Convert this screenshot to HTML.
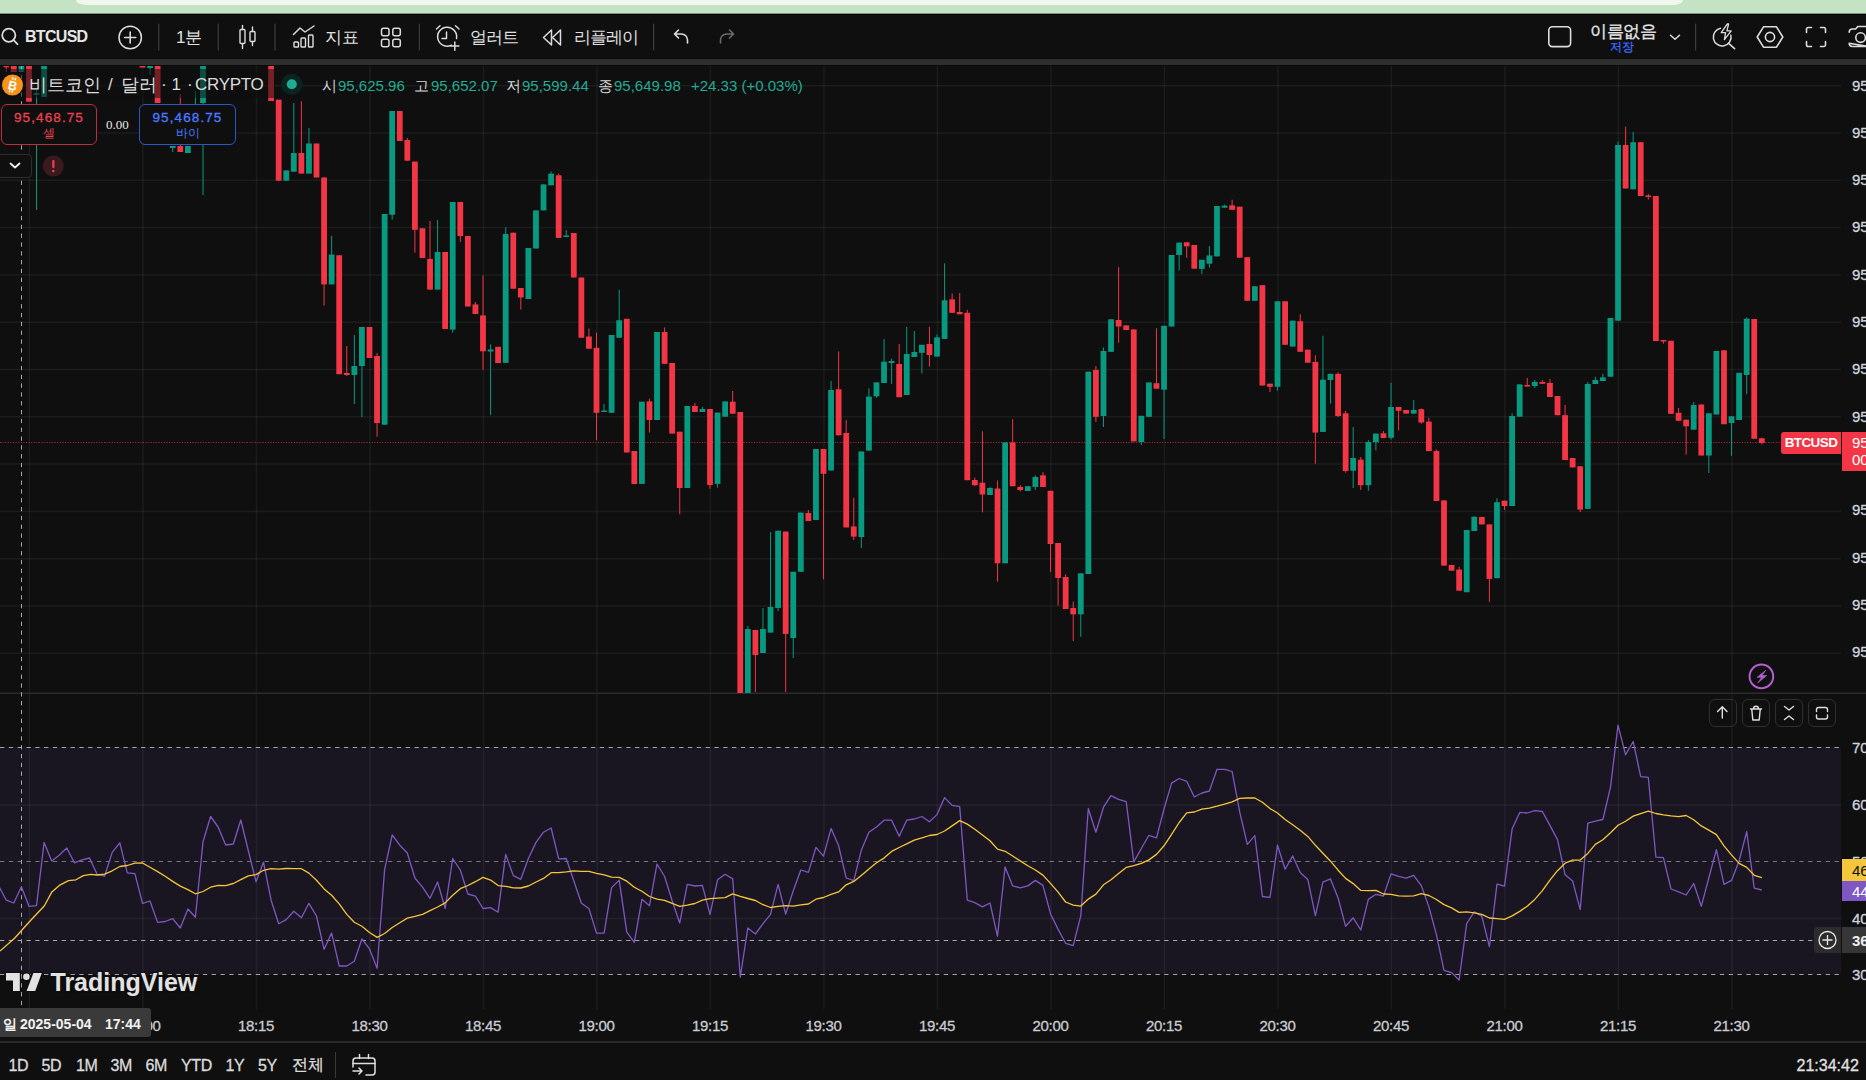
<!DOCTYPE html>
<html><head><meta charset="utf-8"><title>BTCUSD</title>
<style>
*{margin:0;padding:0;box-sizing:border-box}
html,body{width:1866px;height:1080px;overflow:hidden;background:#0f0f0f;font-family:"Liberation Sans",sans-serif;color:#d1d4dc}
.abs{position:absolute}
.t{position:absolute;white-space:nowrap;line-height:1}
.m{-webkit-text-stroke:0.3px currentColor}
.ic{position:absolute}
</style></head><body>
<!-- top browser strip -->
<div class="abs" style="left:0;top:0;width:1866px;height:14px;background:#c4e2c4"></div>
<div class="abs" style="left:0;top:13px;width:1866px;height:1px;background:#7d8f7d"></div>
<div class="abs" style="left:75.5px;top:0;width:1607px;height:5px;background:#f1f6ef;border-radius:0 0 10px 10px / 0 0 5px 5px"></div>
<div class="abs" style="left:0;top:14px;width:1866px;height:1px;background:#050505"></div>
<!-- toolbar -->
<div class="abs" style="left:0;top:15px;width:1866px;height:43px;background:#0f0f0f"></div>
<div class="abs" style="left:0;top:58px;width:1866px;height:1px;background:#0a0a0a"></div>
<div class="abs" style="left:0;top:59px;width:1866px;height:6px;background:#2e2e2e"></div>
<div class="abs" style="left:0;top:65px;width:1866px;height:1px;background:#0a0a0a"></div>
<svg class="abs" style="left:0;top:14px" width="1866" height="44" viewBox="0 14 1866 44" fill="none" stroke="#dcdcdc" stroke-width="1.6" stroke-linecap="round" stroke-linejoin="round">
  <!-- search -->
  <circle cx="8.8" cy="35.3" r="6.6" stroke-width="1.8"/>
  <line x1="13.6" y1="40.2" x2="17.5" y2="44.2" stroke-width="1.8"/>
  <!-- plus circle -->
  <circle cx="130.2" cy="37.5" r="11.2" stroke-width="1.5"/>
  <line x1="130.2" y1="32" x2="130.2" y2="43" stroke-width="1.6"/>
  <line x1="124.7" y1="37.5" x2="135.7" y2="37.5" stroke-width="1.6"/>
  <!-- separators -->
  <g stroke="#3d3d3d" stroke-width="1.2">
    <line x1="158.8" y1="24" x2="158.8" y2="50"/>
    <line x1="218.3" y1="24" x2="218.3" y2="50"/>
    <line x1="275" y1="24" x2="275" y2="50"/>
    <line x1="419.3" y1="24" x2="419.3" y2="50"/>
    <line x1="653.6" y1="24" x2="653.6" y2="50"/>
    <line x1="1695.6" y1="24" x2="1695.6" y2="50"/>
  </g>
  <!-- candle icon -->
  <rect x="240" y="29.5" width="5" height="14" rx="1" stroke-width="1.4"/>
  <line x1="242.5" y1="25.5" x2="242.5" y2="29.5" stroke-width="1.4"/>
  <line x1="242.5" y1="43.5" x2="242.5" y2="48.5" stroke-width="1.4"/>
  <rect x="250" y="31.5" width="5" height="10" rx="1" stroke-width="1.4"/>
  <line x1="252.5" y1="27" x2="252.5" y2="31.5" stroke-width="1.4"/>
  <line x1="252.5" y1="41.5" x2="252.5" y2="45.5" stroke-width="1.4"/>
  <!-- indicators icon -->
  <path d="M293.5 34.5 L300 28 L305 32 L314 26" stroke-width="1.5"/>
  <rect x="294" y="42" width="4.5" height="5" rx="0.8" stroke-width="1.4"/>
  <rect x="301" y="38" width="4.5" height="9" rx="0.8" stroke-width="1.4"/>
  <rect x="308.5" y="35" width="4.5" height="12" rx="0.8" stroke-width="1.4"/>
  <!-- grid icon -->
  <rect x="381.5" y="28.2" width="7.5" height="7.5" rx="2" stroke-width="1.5"/>
  <rect x="392.8" y="28.2" width="7.5" height="7.5" rx="2" stroke-width="1.5"/>
  <rect x="381.5" y="39.2" width="7.5" height="7.5" rx="2" stroke-width="1.5"/>
  <rect x="392.8" y="39.2" width="7.5" height="7.5" rx="2" stroke-width="1.5"/>
  <!-- alert icon -->
  <path d="M451.5 45.2 A9.5 9.5 0 1 1 456.5 38.5" stroke-width="1.5"/>
  <path d="M446.5 32 V38.5 H442" stroke-width="1.5"/>
  <line x1="436.5" y1="29" x2="440" y2="25.8" stroke-width="1.5"/>
  <line x1="455.5" y1="25.8" x2="459" y2="29" stroke-width="1.5"/>
  <line x1="454.8" y1="42" x2="454.8" y2="50.2" stroke-width="1.5"/>
  <line x1="450.7" y1="46.1" x2="458.9" y2="46.1" stroke-width="1.5"/>
  <!-- replay icon -->
  <path d="M551.5 30 L543.5 37.5 L551.5 45 Z" stroke-width="1.5"/>
  <path d="M560.5 30 L552.5 37.5 L560.5 45 Z" stroke-width="1.5"/>
  <!-- undo -->
  <path d="M687.5 43 V40 A6 6 0 0 0 681.5 34 H674.5 M678.5 30 L674.5 34 L678.5 38" stroke-width="1.6"/>
  <!-- redo -->
  <path d="M720.5 43 V40 A6 6 0 0 1 726.5 34 H733.5 M729.5 30 L733.5 34 L729.5 38" stroke="#6b6b6b" stroke-width="1.6"/>
  <!-- square -->
  <rect x="1548.8" y="26.8" width="21.8" height="19.8" rx="3.5" stroke-width="1.6"/>
  <!-- chevron -->
  <path d="M1670.5 35.2 L1675 39.3 L1679.5 35.2" stroke-width="1.5"/>
  <!-- quick search -->
  <path d="M1720.5 28.3 A8.9 8.9 0 1 0 1730.9 35.2" stroke-width="1.5"/>
  <line x1="1728.6" y1="43.3" x2="1734.6" y2="48.7" stroke-width="1.6"/>
  <path d="M1727.3 24 L1721.2 32.6 H1725.6 L1724.4 39.6 L1731.2 30.9 H1726.9 L1728.6 24 Z" stroke-width="1.3"/>
  <!-- settings hexagon -->
  <path d="M1763.5 26.8 H1776.5 L1782.8 37 L1776.5 47.2 H1763.5 L1757.2 37 Z" stroke-width="1.6"/>
  <circle cx="1770" cy="37" r="4.6" stroke-width="1.6"/>
  <!-- fullscreen -->
  <path d="M1806.5 32.5 V29.3 A1.8 1.8 0 0 1 1808.3 27.5 H1811.5 M1820.5 27.5 H1823.7 A1.8 1.8 0 0 1 1825.5 29.3 V32.5 M1825.5 41.5 V44.7 A1.8 1.8 0 0 1 1823.7 46.5 H1820.5 M1811.5 46.5 H1808.3 A1.8 1.8 0 0 1 1806.5 44.7 V41.5" stroke-width="1.6"/>
  <!-- camera -->
  <path d="M1849.2 32.2 A3.2 3.2 0 0 1 1852.4 29 H1855.6 L1857.8 26.5 H1868 M1868 46.5 H1852.4 A3.2 3.2 0 0 1 1849.2 43.3 Z" stroke-width="1.6"/>
  <circle cx="1860.6" cy="37.6" r="4.8" stroke-width="1.6"/>
</svg>
<div class="t" style="left:25px;top:28.5px;font-size:16px;font-weight:bold;color:#e6e6e6;letter-spacing:-0.7px">BTCUSD</div>
<div class="t" style="left:176px;top:28.5px;font-size:17px;color:#e0e0e0">1분</div>
<div class="t" style="left:325px;top:28.5px;font-size:17px;color:#e0e0e0">지표</div>
<div class="t" style="left:470px;top:29px;font-size:16.5px;letter-spacing:-0.9px;color:#e0e0e0">얼러트</div>
<div class="t" style="left:574px;top:29px;font-size:16.5px;letter-spacing:-1px;color:#e0e0e0">리플레이</div>
<div class="t" style="left:1590px;top:23px;font-size:16.5px;letter-spacing:-0.5px;color:#e6e6e6;-webkit-text-stroke:0.3px #e6e6e6">이름없음</div>
<div class="t" style="left:1610px;top:42px;font-size:11.5px;color:#3d6bff;-webkit-text-stroke:0.3px #3d6bff">저장</div>
<svg class="abs" style="left:0;top:0" width="1866" height="1080" viewBox="0 0 1866 1080">
<defs><clipPath id="mainclip"><rect x="0" y="66" width="1841" height="627"/></clipPath><clipPath id="rsiclip"><rect x="0" y="694" width="1841" height="315"/></clipPath></defs>
<rect x="0" y="747" width="1841" height="227.5" fill="#1a1621"/>
<line x1="0" y1="85.7" x2="1841" y2="85.7" stroke="rgba(242,242,242,0.058)" stroke-width="1.5"/>
<line x1="0" y1="133.0" x2="1841" y2="133.0" stroke="rgba(242,242,242,0.058)" stroke-width="1.5"/>
<line x1="0" y1="180.3" x2="1841" y2="180.3" stroke="rgba(242,242,242,0.058)" stroke-width="1.5"/>
<line x1="0" y1="227.6" x2="1841" y2="227.6" stroke="rgba(242,242,242,0.058)" stroke-width="1.5"/>
<line x1="0" y1="274.9" x2="1841" y2="274.9" stroke="rgba(242,242,242,0.058)" stroke-width="1.5"/>
<line x1="0" y1="322.2" x2="1841" y2="322.2" stroke="rgba(242,242,242,0.058)" stroke-width="1.5"/>
<line x1="0" y1="369.5" x2="1841" y2="369.5" stroke="rgba(242,242,242,0.058)" stroke-width="1.5"/>
<line x1="0" y1="416.8" x2="1841" y2="416.8" stroke="rgba(242,242,242,0.058)" stroke-width="1.5"/>
<line x1="0" y1="464.1" x2="1841" y2="464.1" stroke="rgba(242,242,242,0.058)" stroke-width="1.5"/>
<line x1="0" y1="511.4" x2="1841" y2="511.4" stroke="rgba(242,242,242,0.058)" stroke-width="1.5"/>
<line x1="0" y1="558.7" x2="1841" y2="558.7" stroke="rgba(242,242,242,0.058)" stroke-width="1.5"/>
<line x1="0" y1="606.0" x2="1841" y2="606.0" stroke="rgba(242,242,242,0.058)" stroke-width="1.5"/>
<line x1="0" y1="653.3" x2="1841" y2="653.3" stroke="rgba(242,242,242,0.058)" stroke-width="1.5"/>
<line x1="0" y1="804.9" x2="1841" y2="804.9" stroke="rgba(242,242,242,0.058)" stroke-width="1.5"/>
<line x1="0" y1="918.4" x2="1841" y2="918.4" stroke="rgba(242,242,242,0.058)" stroke-width="1.5"/>
<line x1="29.4" y1="66" x2="29.4" y2="1009" stroke="rgba(242,242,242,0.058)" stroke-width="1.5"/>
<line x1="142.9" y1="66" x2="142.9" y2="1009" stroke="rgba(242,242,242,0.058)" stroke-width="1.5"/>
<line x1="256.4" y1="66" x2="256.4" y2="1009" stroke="rgba(242,242,242,0.058)" stroke-width="1.5"/>
<line x1="369.9" y1="66" x2="369.9" y2="1009" stroke="rgba(242,242,242,0.058)" stroke-width="1.5"/>
<line x1="483.4" y1="66" x2="483.4" y2="1009" stroke="rgba(242,242,242,0.058)" stroke-width="1.5"/>
<line x1="596.9" y1="66" x2="596.9" y2="1009" stroke="rgba(242,242,242,0.058)" stroke-width="1.5"/>
<line x1="710.4" y1="66" x2="710.4" y2="1009" stroke="rgba(242,242,242,0.058)" stroke-width="1.5"/>
<line x1="823.9" y1="66" x2="823.9" y2="1009" stroke="rgba(242,242,242,0.058)" stroke-width="1.5"/>
<line x1="937.4" y1="66" x2="937.4" y2="1009" stroke="rgba(242,242,242,0.058)" stroke-width="1.5"/>
<line x1="1050.9" y1="66" x2="1050.9" y2="1009" stroke="rgba(242,242,242,0.058)" stroke-width="1.5"/>
<line x1="1164.4" y1="66" x2="1164.4" y2="1009" stroke="rgba(242,242,242,0.058)" stroke-width="1.5"/>
<line x1="1277.9" y1="66" x2="1277.9" y2="1009" stroke="rgba(242,242,242,0.058)" stroke-width="1.5"/>
<line x1="1391.4" y1="66" x2="1391.4" y2="1009" stroke="rgba(242,242,242,0.058)" stroke-width="1.5"/>
<line x1="1504.9" y1="66" x2="1504.9" y2="1009" stroke="rgba(242,242,242,0.058)" stroke-width="1.5"/>
<line x1="1618.4" y1="66" x2="1618.4" y2="1009" stroke="rgba(242,242,242,0.058)" stroke-width="1.5"/>
<line x1="1731.9" y1="66" x2="1731.9" y2="1009" stroke="rgba(242,242,242,0.058)" stroke-width="1.5"/>
<rect x="0" y="692.5" width="1866" height="1.5" fill="#2b2b2b"/>
<line x1="0" y1="442.5" x2="1781" y2="442.5" stroke="#f23645" stroke-opacity="0.75" stroke-width="1" stroke-dasharray="1 1.6"/>
<g clip-path="url(#mainclip)">
<rect x="5.77" y="64.0" width="1.0" height="8.0" fill="#f23645"/>
<rect x="3.37" y="66.0" width="5.8" height="1.2" fill="#f23645"/>
<rect x="13.33" y="64.0" width="1.0" height="8.0" fill="#f23645"/>
<rect x="10.93" y="64.0" width="5.8" height="8.0" fill="#f23645"/>
<rect x="20.90" y="64.0" width="1.0" height="8.0" fill="#089981"/>
<rect x="18.50" y="64.0" width="5.8" height="8.0" fill="#089981"/>
<rect x="28.47" y="64.0" width="1.0" height="37.7" fill="#f23645"/>
<rect x="26.07" y="64.0" width="5.8" height="37.7" fill="#f23645"/>
<rect x="36.04" y="90.0" width="1.0" height="120.0" fill="#089981"/>
<rect x="33.64" y="93.0" width="5.8" height="2.0" fill="#089981"/>
<rect x="43.60" y="64.0" width="1.0" height="33.0" fill="#089981"/>
<rect x="41.20" y="64.0" width="5.8" height="33.0" fill="#089981"/>
<rect x="141.97" y="66.0" width="1.0" height="1.5" fill="#f23645"/>
<rect x="139.57" y="66.0" width="5.8" height="1.5" fill="#f23645"/>
<rect x="149.54" y="64.0" width="1.0" height="11.0" fill="#089981"/>
<rect x="147.14" y="64.0" width="5.8" height="4.0" fill="#089981"/>
<rect x="157.11" y="64.0" width="1.0" height="39.0" fill="#f23645"/>
<rect x="154.71" y="64.0" width="5.8" height="39.0" fill="#f23645"/>
<rect x="172.24" y="146.0" width="1.0" height="6.0" fill="#089981"/>
<rect x="169.84" y="146.0" width="5.8" height="2.0" fill="#089981"/>
<rect x="179.81" y="94.0" width="1.0" height="58.0" fill="#f23645"/>
<rect x="177.41" y="146.0" width="5.8" height="6.0" fill="#f23645"/>
<rect x="187.38" y="146.0" width="1.0" height="7.0" fill="#089981"/>
<rect x="184.97" y="146.0" width="5.8" height="7.0" fill="#089981"/>
<rect x="194.94" y="91.0" width="1.0" height="49.0" fill="#089981"/>
<rect x="192.54" y="104.0" width="5.8" height="36.0" fill="#089981"/>
<rect x="202.51" y="64.0" width="1.0" height="131.0" fill="#089981"/>
<rect x="200.11" y="64.0" width="5.8" height="39.0" fill="#089981"/>
<rect x="270.61" y="64.0" width="1.0" height="37.0" fill="#f23645"/>
<rect x="268.21" y="64.0" width="5.8" height="37.0" fill="#f23645"/>
<rect x="278.18" y="99.7" width="1.0" height="81.0" fill="#f23645"/>
<rect x="275.78" y="99.7" width="5.8" height="81.0" fill="#f23645"/>
<rect x="285.75" y="170.4" width="1.0" height="10.3" fill="#089981"/>
<rect x="283.35" y="170.4" width="5.8" height="10.3" fill="#089981"/>
<rect x="293.31" y="103.0" width="1.0" height="68.7" fill="#089981"/>
<rect x="290.91" y="153.0" width="5.8" height="18.7" fill="#089981"/>
<rect x="300.88" y="101.3" width="1.0" height="72.3" fill="#f23645"/>
<rect x="298.48" y="153.0" width="5.8" height="20.6" fill="#f23645"/>
<rect x="308.45" y="128.0" width="1.0" height="45.6" fill="#089981"/>
<rect x="306.05" y="143.5" width="5.8" height="30.1" fill="#089981"/>
<rect x="316.01" y="143.5" width="1.0" height="34.0" fill="#f23645"/>
<rect x="313.61" y="143.5" width="5.8" height="34.0" fill="#f23645"/>
<rect x="323.58" y="177.5" width="1.0" height="128.0" fill="#f23645"/>
<rect x="321.18" y="177.5" width="5.8" height="106.9" fill="#f23645"/>
<rect x="331.15" y="235.8" width="1.0" height="48.6" fill="#089981"/>
<rect x="328.75" y="254.6" width="5.8" height="29.8" fill="#089981"/>
<rect x="338.71" y="255.3" width="1.0" height="118.9" fill="#f23645"/>
<rect x="336.31" y="255.3" width="5.8" height="118.9" fill="#f23645"/>
<rect x="346.28" y="346.0" width="1.0" height="30.0" fill="#f23645"/>
<rect x="343.88" y="373.0" width="5.8" height="2.0" fill="#f23645"/>
<rect x="353.85" y="335.0" width="1.0" height="69.0" fill="#089981"/>
<rect x="351.45" y="366.0" width="5.8" height="9.0" fill="#089981"/>
<rect x="361.42" y="327.0" width="1.0" height="90.0" fill="#089981"/>
<rect x="359.02" y="327.0" width="5.8" height="39.0" fill="#089981"/>
<rect x="368.98" y="327.0" width="1.0" height="31.0" fill="#f23645"/>
<rect x="366.58" y="327.0" width="5.8" height="31.0" fill="#f23645"/>
<rect x="376.55" y="353.0" width="1.0" height="83.7" fill="#f23645"/>
<rect x="374.15" y="356.0" width="5.8" height="67.0" fill="#f23645"/>
<rect x="384.12" y="214.0" width="1.0" height="210.7" fill="#089981"/>
<rect x="381.72" y="214.0" width="5.8" height="210.7" fill="#089981"/>
<rect x="391.68" y="111.0" width="1.0" height="108.6" fill="#089981"/>
<rect x="389.28" y="111.0" width="5.8" height="103.8" fill="#089981"/>
<rect x="399.25" y="111.0" width="1.0" height="30.0" fill="#f23645"/>
<rect x="396.85" y="111.0" width="5.8" height="30.0" fill="#f23645"/>
<rect x="406.82" y="138.0" width="1.0" height="22.7" fill="#f23645"/>
<rect x="404.42" y="140.0" width="5.8" height="20.7" fill="#f23645"/>
<rect x="414.38" y="161.6" width="1.0" height="91.0" fill="#f23645"/>
<rect x="411.99" y="161.6" width="5.8" height="68.2" fill="#f23645"/>
<rect x="421.95" y="228.3" width="1.0" height="29.7" fill="#f23645"/>
<rect x="419.55" y="228.3" width="5.8" height="29.7" fill="#f23645"/>
<rect x="429.52" y="221.0" width="1.0" height="68.6" fill="#f23645"/>
<rect x="427.12" y="259.0" width="5.8" height="30.6" fill="#f23645"/>
<rect x="437.09" y="220.0" width="1.0" height="69.6" fill="#089981"/>
<rect x="434.69" y="252.0" width="5.8" height="37.6" fill="#089981"/>
<rect x="444.65" y="252.0" width="1.0" height="77.0" fill="#f23645"/>
<rect x="442.25" y="252.0" width="5.8" height="77.0" fill="#f23645"/>
<rect x="452.22" y="202.0" width="1.0" height="130.6" fill="#089981"/>
<rect x="449.82" y="202.0" width="5.8" height="127.6" fill="#089981"/>
<rect x="459.79" y="202.0" width="1.0" height="40.0" fill="#f23645"/>
<rect x="457.39" y="202.0" width="5.8" height="34.0" fill="#f23645"/>
<rect x="467.35" y="236.0" width="1.0" height="70.5" fill="#f23645"/>
<rect x="464.95" y="236.0" width="5.8" height="70.5" fill="#f23645"/>
<rect x="474.92" y="302.0" width="1.0" height="12.0" fill="#f23645"/>
<rect x="472.52" y="304.4" width="5.8" height="9.6" fill="#f23645"/>
<rect x="482.49" y="275.7" width="1.0" height="93.9" fill="#f23645"/>
<rect x="480.09" y="315.4" width="5.8" height="35.9" fill="#f23645"/>
<rect x="490.06" y="344.4" width="1.0" height="70.6" fill="#089981"/>
<rect x="487.66" y="349.5" width="5.8" height="2.0" fill="#089981"/>
<rect x="497.62" y="346.8" width="1.0" height="16.2" fill="#f23645"/>
<rect x="495.22" y="346.8" width="5.8" height="16.2" fill="#f23645"/>
<rect x="505.19" y="227.4" width="1.0" height="135.4" fill="#089981"/>
<rect x="502.79" y="234.0" width="5.8" height="128.8" fill="#089981"/>
<rect x="512.76" y="232.7" width="1.0" height="56.0" fill="#f23645"/>
<rect x="510.36" y="232.7" width="5.8" height="56.0" fill="#f23645"/>
<rect x="520.32" y="288.0" width="1.0" height="21.6" fill="#f23645"/>
<rect x="517.92" y="288.0" width="5.8" height="9.4" fill="#f23645"/>
<rect x="527.89" y="248.0" width="1.0" height="51.0" fill="#089981"/>
<rect x="525.49" y="248.0" width="5.8" height="51.0" fill="#089981"/>
<rect x="535.46" y="210.4" width="1.0" height="38.1" fill="#089981"/>
<rect x="533.06" y="210.4" width="5.8" height="38.1" fill="#089981"/>
<rect x="543.02" y="184.4" width="1.0" height="26.0" fill="#089981"/>
<rect x="540.62" y="184.4" width="5.8" height="26.0" fill="#089981"/>
<rect x="550.59" y="171.6" width="1.0" height="13.7" fill="#089981"/>
<rect x="548.19" y="173.7" width="5.8" height="11.6" fill="#089981"/>
<rect x="558.16" y="173.7" width="1.0" height="64.2" fill="#f23645"/>
<rect x="555.76" y="175.3" width="5.8" height="62.6" fill="#f23645"/>
<rect x="565.73" y="230.0" width="1.0" height="7.0" fill="#089981"/>
<rect x="563.33" y="235.5" width="5.8" height="1.5" fill="#089981"/>
<rect x="573.29" y="233.0" width="1.0" height="44.5" fill="#f23645"/>
<rect x="570.89" y="233.0" width="5.8" height="44.5" fill="#f23645"/>
<rect x="580.86" y="277.5" width="1.0" height="60.2" fill="#f23645"/>
<rect x="578.46" y="277.5" width="5.8" height="60.2" fill="#f23645"/>
<rect x="588.43" y="328.5" width="1.0" height="20.2" fill="#f23645"/>
<rect x="586.03" y="336.5" width="5.8" height="12.2" fill="#f23645"/>
<rect x="595.99" y="332.5" width="1.0" height="107.8" fill="#f23645"/>
<rect x="593.59" y="347.8" width="5.8" height="65.0" fill="#f23645"/>
<rect x="603.56" y="404.0" width="1.0" height="8.0" fill="#089981"/>
<rect x="601.16" y="410.5" width="5.8" height="1.5" fill="#089981"/>
<rect x="611.13" y="335.0" width="1.0" height="77.8" fill="#089981"/>
<rect x="608.73" y="335.0" width="5.8" height="77.8" fill="#089981"/>
<rect x="618.69" y="289.8" width="1.0" height="47.9" fill="#089981"/>
<rect x="616.29" y="320.3" width="5.8" height="17.4" fill="#089981"/>
<rect x="626.26" y="318.8" width="1.0" height="133.7" fill="#f23645"/>
<rect x="623.86" y="318.8" width="5.8" height="133.7" fill="#f23645"/>
<rect x="633.83" y="451.0" width="1.0" height="33.0" fill="#f23645"/>
<rect x="631.43" y="451.0" width="5.8" height="33.0" fill="#f23645"/>
<rect x="641.40" y="401.7" width="1.0" height="82.2" fill="#089981"/>
<rect x="639.00" y="401.7" width="5.8" height="82.2" fill="#089981"/>
<rect x="648.96" y="398.7" width="1.0" height="33.8" fill="#f23645"/>
<rect x="646.56" y="401.4" width="5.8" height="18.6" fill="#f23645"/>
<rect x="656.53" y="332.0" width="1.0" height="88.0" fill="#089981"/>
<rect x="654.13" y="332.0" width="5.8" height="88.0" fill="#089981"/>
<rect x="664.10" y="327.5" width="1.0" height="36.4" fill="#f23645"/>
<rect x="661.70" y="332.0" width="5.8" height="31.9" fill="#f23645"/>
<rect x="671.66" y="363.0" width="1.0" height="70.6" fill="#f23645"/>
<rect x="669.26" y="363.0" width="5.8" height="70.6" fill="#f23645"/>
<rect x="679.23" y="431.7" width="1.0" height="82.5" fill="#f23645"/>
<rect x="676.83" y="431.7" width="5.8" height="56.3" fill="#f23645"/>
<rect x="686.80" y="406.0" width="1.0" height="82.0" fill="#089981"/>
<rect x="684.40" y="406.0" width="5.8" height="82.0" fill="#089981"/>
<rect x="694.36" y="403.0" width="1.0" height="9.0" fill="#f23645"/>
<rect x="691.96" y="406.0" width="5.8" height="6.0" fill="#f23645"/>
<rect x="701.93" y="407.0" width="1.0" height="5.0" fill="#089981"/>
<rect x="699.53" y="409.0" width="5.8" height="3.0" fill="#089981"/>
<rect x="709.50" y="409.0" width="1.0" height="79.7" fill="#f23645"/>
<rect x="707.10" y="409.0" width="5.8" height="76.0" fill="#f23645"/>
<rect x="717.07" y="412.6" width="1.0" height="75.0" fill="#089981"/>
<rect x="714.67" y="412.6" width="5.8" height="71.3" fill="#089981"/>
<rect x="724.63" y="401.4" width="1.0" height="15.3" fill="#089981"/>
<rect x="722.23" y="401.4" width="5.8" height="15.3" fill="#089981"/>
<rect x="732.20" y="391.0" width="1.0" height="22.7" fill="#f23645"/>
<rect x="729.80" y="401.7" width="5.8" height="12.0" fill="#f23645"/>
<rect x="739.77" y="412.0" width="1.0" height="281.0" fill="#f23645"/>
<rect x="737.37" y="412.0" width="5.8" height="281.0" fill="#f23645"/>
<rect x="747.33" y="626.0" width="1.0" height="67.4" fill="#089981"/>
<rect x="744.93" y="629.0" width="5.8" height="64.4" fill="#089981"/>
<rect x="754.90" y="630.0" width="1.0" height="62.0" fill="#f23645"/>
<rect x="752.50" y="630.0" width="5.8" height="25.0" fill="#f23645"/>
<rect x="762.47" y="608.0" width="1.0" height="45.0" fill="#089981"/>
<rect x="760.07" y="629.0" width="5.8" height="24.0" fill="#089981"/>
<rect x="770.03" y="532.0" width="1.0" height="100.6" fill="#089981"/>
<rect x="767.63" y="607.0" width="5.8" height="25.6" fill="#089981"/>
<rect x="777.60" y="530.7" width="1.0" height="80.3" fill="#089981"/>
<rect x="775.20" y="530.7" width="5.8" height="77.3" fill="#089981"/>
<rect x="785.17" y="531.6" width="1.0" height="160.4" fill="#f23645"/>
<rect x="782.77" y="531.6" width="5.8" height="102.4" fill="#f23645"/>
<rect x="792.74" y="571.8" width="1.0" height="86.2" fill="#089981"/>
<rect x="790.34" y="571.8" width="5.8" height="66.2" fill="#089981"/>
<rect x="800.30" y="512.6" width="1.0" height="59.2" fill="#089981"/>
<rect x="797.90" y="512.6" width="5.8" height="59.2" fill="#089981"/>
<rect x="807.87" y="510.0" width="1.0" height="11.0" fill="#f23645"/>
<rect x="805.47" y="513.0" width="5.8" height="8.0" fill="#f23645"/>
<rect x="815.44" y="449.0" width="1.0" height="71.0" fill="#089981"/>
<rect x="813.04" y="449.0" width="5.8" height="71.0" fill="#089981"/>
<rect x="823.00" y="449.0" width="1.0" height="130.3" fill="#f23645"/>
<rect x="820.60" y="449.0" width="5.8" height="24.8" fill="#f23645"/>
<rect x="830.57" y="381.0" width="1.0" height="89.5" fill="#089981"/>
<rect x="828.17" y="390.0" width="5.8" height="80.5" fill="#089981"/>
<rect x="838.14" y="351.5" width="1.0" height="83.8" fill="#f23645"/>
<rect x="835.74" y="389.3" width="5.8" height="46.0" fill="#f23645"/>
<rect x="845.70" y="420.0" width="1.0" height="107.4" fill="#f23645"/>
<rect x="843.30" y="433.0" width="5.8" height="94.4" fill="#f23645"/>
<rect x="853.27" y="497.8" width="1.0" height="42.2" fill="#f23645"/>
<rect x="850.87" y="526.4" width="5.8" height="10.2" fill="#f23645"/>
<rect x="860.84" y="451.5" width="1.0" height="96.5" fill="#089981"/>
<rect x="858.44" y="451.5" width="5.8" height="85.5" fill="#089981"/>
<rect x="868.41" y="388.3" width="1.0" height="62.3" fill="#089981"/>
<rect x="866.01" y="396.6" width="5.8" height="54.0" fill="#089981"/>
<rect x="875.97" y="382.4" width="1.0" height="15.4" fill="#089981"/>
<rect x="873.57" y="382.4" width="5.8" height="13.9" fill="#089981"/>
<rect x="883.54" y="338.9" width="1.0" height="44.1" fill="#089981"/>
<rect x="881.14" y="361.7" width="5.8" height="21.3" fill="#089981"/>
<rect x="891.11" y="358.7" width="1.0" height="25.2" fill="#089981"/>
<rect x="888.71" y="361.0" width="5.8" height="2.0" fill="#089981"/>
<rect x="898.67" y="344.0" width="1.0" height="53.2" fill="#f23645"/>
<rect x="896.27" y="364.0" width="5.8" height="33.2" fill="#f23645"/>
<rect x="906.24" y="327.0" width="1.0" height="68.0" fill="#089981"/>
<rect x="903.84" y="354.0" width="5.8" height="41.0" fill="#089981"/>
<rect x="913.81" y="331.0" width="1.0" height="26.0" fill="#089981"/>
<rect x="911.41" y="352.0" width="5.8" height="5.0" fill="#089981"/>
<rect x="921.37" y="344.8" width="1.0" height="28.7" fill="#089981"/>
<rect x="918.97" y="344.8" width="5.8" height="8.0" fill="#089981"/>
<rect x="928.94" y="327.0" width="1.0" height="39.7" fill="#f23645"/>
<rect x="926.54" y="344.0" width="5.8" height="11.0" fill="#f23645"/>
<rect x="936.51" y="334.4" width="1.0" height="22.2" fill="#089981"/>
<rect x="934.11" y="337.4" width="5.8" height="19.2" fill="#089981"/>
<rect x="944.08" y="263.3" width="1.0" height="75.6" fill="#089981"/>
<rect x="941.68" y="300.3" width="5.8" height="38.6" fill="#089981"/>
<rect x="951.64" y="293.5" width="1.0" height="19.3" fill="#f23645"/>
<rect x="949.24" y="299.4" width="5.8" height="13.4" fill="#f23645"/>
<rect x="959.21" y="293.0" width="1.0" height="21.3" fill="#f23645"/>
<rect x="956.81" y="312.0" width="5.8" height="2.3" fill="#f23645"/>
<rect x="966.78" y="309.8" width="1.0" height="170.4" fill="#f23645"/>
<rect x="964.38" y="312.8" width="5.8" height="167.4" fill="#f23645"/>
<rect x="974.34" y="477.6" width="1.0" height="8.4" fill="#f23645"/>
<rect x="971.94" y="480.0" width="5.8" height="5.2" fill="#f23645"/>
<rect x="981.91" y="431.3" width="1.0" height="81.0" fill="#f23645"/>
<rect x="979.51" y="482.7" width="5.8" height="11.8" fill="#f23645"/>
<rect x="989.48" y="486.9" width="1.0" height="8.1" fill="#089981"/>
<rect x="987.08" y="488.0" width="5.8" height="7.0" fill="#089981"/>
<rect x="997.04" y="480.6" width="1.0" height="101.2" fill="#f23645"/>
<rect x="994.64" y="488.5" width="5.8" height="74.8" fill="#f23645"/>
<rect x="1004.61" y="442.4" width="1.0" height="120.9" fill="#089981"/>
<rect x="1002.21" y="442.4" width="5.8" height="120.9" fill="#089981"/>
<rect x="1012.18" y="419.2" width="1.0" height="67.0" fill="#f23645"/>
<rect x="1009.78" y="442.4" width="5.8" height="43.8" fill="#f23645"/>
<rect x="1019.75" y="485.2" width="1.0" height="6.3" fill="#f23645"/>
<rect x="1017.35" y="486.9" width="5.8" height="3.1" fill="#f23645"/>
<rect x="1027.31" y="486.2" width="1.0" height="4.8" fill="#089981"/>
<rect x="1024.91" y="486.2" width="5.8" height="4.8" fill="#089981"/>
<rect x="1034.88" y="475.3" width="1.0" height="14.7" fill="#089981"/>
<rect x="1032.48" y="477.0" width="5.8" height="10.0" fill="#089981"/>
<rect x="1042.45" y="472.3" width="1.0" height="14.7" fill="#f23645"/>
<rect x="1040.05" y="475.3" width="5.8" height="11.7" fill="#f23645"/>
<rect x="1050.01" y="490.8" width="1.0" height="81.1" fill="#f23645"/>
<rect x="1047.61" y="490.8" width="5.8" height="53.2" fill="#f23645"/>
<rect x="1057.58" y="543.0" width="1.0" height="62.7" fill="#f23645"/>
<rect x="1055.18" y="543.0" width="5.8" height="35.0" fill="#f23645"/>
<rect x="1065.15" y="574.2" width="1.0" height="34.8" fill="#f23645"/>
<rect x="1062.75" y="577.0" width="5.8" height="32.0" fill="#f23645"/>
<rect x="1072.71" y="601.5" width="1.0" height="39.5" fill="#f23645"/>
<rect x="1070.31" y="608.0" width="5.8" height="6.3" fill="#f23645"/>
<rect x="1080.28" y="573.3" width="1.0" height="63.4" fill="#089981"/>
<rect x="1077.88" y="573.3" width="5.8" height="41.0" fill="#089981"/>
<rect x="1087.85" y="371.7" width="1.0" height="202.3" fill="#089981"/>
<rect x="1085.45" y="371.7" width="5.8" height="202.3" fill="#089981"/>
<rect x="1095.41" y="366.0" width="1.0" height="56.0" fill="#f23645"/>
<rect x="1093.01" y="369.9" width="5.8" height="46.9" fill="#f23645"/>
<rect x="1102.98" y="347.5" width="1.0" height="79.5" fill="#089981"/>
<rect x="1100.58" y="351.0" width="5.8" height="65.0" fill="#089981"/>
<rect x="1110.55" y="319.3" width="1.0" height="32.5" fill="#089981"/>
<rect x="1108.15" y="319.3" width="5.8" height="32.5" fill="#089981"/>
<rect x="1118.12" y="266.9" width="1.0" height="75.9" fill="#f23645"/>
<rect x="1115.72" y="320.0" width="5.8" height="6.5" fill="#f23645"/>
<rect x="1125.68" y="325.4" width="1.0" height="4.6" fill="#f23645"/>
<rect x="1123.28" y="325.4" width="5.8" height="4.6" fill="#f23645"/>
<rect x="1133.25" y="329.4" width="1.0" height="112.0" fill="#f23645"/>
<rect x="1130.85" y="329.4" width="5.8" height="112.0" fill="#f23645"/>
<rect x="1140.82" y="415.8" width="1.0" height="29.2" fill="#089981"/>
<rect x="1138.42" y="415.8" width="5.8" height="26.2" fill="#089981"/>
<rect x="1148.38" y="382.5" width="1.0" height="34.3" fill="#089981"/>
<rect x="1145.98" y="382.5" width="5.8" height="34.3" fill="#089981"/>
<rect x="1155.95" y="328.3" width="1.0" height="60.4" fill="#f23645"/>
<rect x="1153.55" y="383.2" width="5.8" height="5.5" fill="#f23645"/>
<rect x="1163.52" y="325.8" width="1.0" height="113.2" fill="#089981"/>
<rect x="1161.12" y="325.8" width="5.8" height="63.9" fill="#089981"/>
<rect x="1171.09" y="255.0" width="1.0" height="71.5" fill="#089981"/>
<rect x="1168.68" y="255.0" width="5.8" height="71.5" fill="#089981"/>
<rect x="1178.65" y="242.6" width="1.0" height="27.9" fill="#089981"/>
<rect x="1176.25" y="242.6" width="5.8" height="12.4" fill="#089981"/>
<rect x="1186.22" y="242.3" width="1.0" height="15.5" fill="#f23645"/>
<rect x="1183.82" y="242.3" width="5.8" height="4.0" fill="#f23645"/>
<rect x="1193.79" y="245.0" width="1.0" height="23.7" fill="#f23645"/>
<rect x="1191.39" y="245.0" width="5.8" height="23.7" fill="#f23645"/>
<rect x="1201.35" y="259.8" width="1.0" height="14.2" fill="#089981"/>
<rect x="1198.95" y="259.8" width="5.8" height="9.1" fill="#089981"/>
<rect x="1208.92" y="246.0" width="1.0" height="21.6" fill="#089981"/>
<rect x="1206.52" y="255.4" width="5.8" height="8.3" fill="#089981"/>
<rect x="1216.49" y="206.0" width="1.0" height="50.4" fill="#089981"/>
<rect x="1214.09" y="206.0" width="5.8" height="50.4" fill="#089981"/>
<rect x="1224.05" y="204.7" width="1.0" height="3.0" fill="#089981"/>
<rect x="1221.65" y="205.7" width="5.8" height="2.0" fill="#089981"/>
<rect x="1231.62" y="199.7" width="1.0" height="10.1" fill="#f23645"/>
<rect x="1229.22" y="205.4" width="5.8" height="4.4" fill="#f23645"/>
<rect x="1239.19" y="206.7" width="1.0" height="51.0" fill="#f23645"/>
<rect x="1236.79" y="206.7" width="5.8" height="51.0" fill="#f23645"/>
<rect x="1246.76" y="257.2" width="1.0" height="43.6" fill="#f23645"/>
<rect x="1244.36" y="257.2" width="5.8" height="43.6" fill="#f23645"/>
<rect x="1254.32" y="286.2" width="1.0" height="14.6" fill="#089981"/>
<rect x="1251.92" y="286.2" width="5.8" height="14.6" fill="#089981"/>
<rect x="1261.89" y="285.2" width="1.0" height="100.3" fill="#f23645"/>
<rect x="1259.49" y="285.2" width="5.8" height="100.3" fill="#f23645"/>
<rect x="1269.46" y="383.7" width="1.0" height="8.3" fill="#f23645"/>
<rect x="1267.06" y="383.7" width="5.8" height="3.1" fill="#f23645"/>
<rect x="1277.02" y="301.3" width="1.0" height="89.4" fill="#089981"/>
<rect x="1274.62" y="301.3" width="5.8" height="85.5" fill="#089981"/>
<rect x="1284.59" y="301.3" width="1.0" height="43.5" fill="#f23645"/>
<rect x="1282.19" y="301.3" width="5.8" height="43.5" fill="#f23645"/>
<rect x="1292.16" y="320.7" width="1.0" height="25.9" fill="#089981"/>
<rect x="1289.76" y="320.7" width="5.8" height="25.9" fill="#089981"/>
<rect x="1299.72" y="314.2" width="1.0" height="37.6" fill="#f23645"/>
<rect x="1297.32" y="321.2" width="5.8" height="30.6" fill="#f23645"/>
<rect x="1307.29" y="349.7" width="1.0" height="13.0" fill="#f23645"/>
<rect x="1304.89" y="349.7" width="5.8" height="13.0" fill="#f23645"/>
<rect x="1314.86" y="355.3" width="1.0" height="108.4" fill="#f23645"/>
<rect x="1312.46" y="361.9" width="5.8" height="70.7" fill="#f23645"/>
<rect x="1322.43" y="335.8" width="1.0" height="96.1" fill="#089981"/>
<rect x="1320.03" y="379.7" width="5.8" height="52.2" fill="#089981"/>
<rect x="1329.99" y="373.8" width="1.0" height="29.9" fill="#089981"/>
<rect x="1327.59" y="373.8" width="5.8" height="6.2" fill="#089981"/>
<rect x="1337.56" y="372.3" width="1.0" height="44.7" fill="#f23645"/>
<rect x="1335.16" y="373.8" width="5.8" height="42.2" fill="#f23645"/>
<rect x="1345.13" y="410.8" width="1.0" height="61.8" fill="#f23645"/>
<rect x="1342.73" y="413.3" width="5.8" height="57.7" fill="#f23645"/>
<rect x="1352.69" y="427.0" width="1.0" height="61.0" fill="#089981"/>
<rect x="1350.29" y="458.0" width="5.8" height="12.7" fill="#089981"/>
<rect x="1360.26" y="457.0" width="1.0" height="33.0" fill="#f23645"/>
<rect x="1357.86" y="459.7" width="5.8" height="25.5" fill="#f23645"/>
<rect x="1367.83" y="440.0" width="1.0" height="50.8" fill="#089981"/>
<rect x="1365.43" y="442.0" width="5.8" height="43.2" fill="#089981"/>
<rect x="1375.39" y="433.6" width="1.0" height="16.8" fill="#089981"/>
<rect x="1372.99" y="433.6" width="5.8" height="8.6" fill="#089981"/>
<rect x="1382.96" y="431.0" width="1.0" height="7.0" fill="#f23645"/>
<rect x="1380.56" y="433.3" width="5.8" height="4.7" fill="#f23645"/>
<rect x="1390.53" y="382.7" width="1.0" height="56.9" fill="#089981"/>
<rect x="1388.13" y="407.0" width="5.8" height="30.8" fill="#089981"/>
<rect x="1398.10" y="407.0" width="1.0" height="23.4" fill="#f23645"/>
<rect x="1395.69" y="407.0" width="5.8" height="3.8" fill="#f23645"/>
<rect x="1405.66" y="410.0" width="1.0" height="3.6" fill="#f23645"/>
<rect x="1403.26" y="410.0" width="5.8" height="3.6" fill="#f23645"/>
<rect x="1413.23" y="400.0" width="1.0" height="13.6" fill="#089981"/>
<rect x="1410.83" y="410.0" width="5.8" height="3.6" fill="#089981"/>
<rect x="1420.80" y="408.5" width="1.0" height="15.2" fill="#f23645"/>
<rect x="1418.40" y="409.2" width="5.8" height="13.3" fill="#f23645"/>
<rect x="1428.36" y="417.8" width="1.0" height="33.3" fill="#f23645"/>
<rect x="1425.96" y="421.6" width="5.8" height="29.5" fill="#f23645"/>
<rect x="1435.93" y="449.5" width="1.0" height="51.5" fill="#f23645"/>
<rect x="1433.53" y="451.0" width="5.8" height="50.0" fill="#f23645"/>
<rect x="1443.50" y="500.4" width="1.0" height="65.2" fill="#f23645"/>
<rect x="1441.10" y="500.4" width="5.8" height="65.2" fill="#f23645"/>
<rect x="1451.06" y="565.0" width="1.0" height="5.7" fill="#f23645"/>
<rect x="1448.66" y="565.0" width="5.8" height="5.7" fill="#f23645"/>
<rect x="1458.63" y="566.7" width="1.0" height="24.0" fill="#f23645"/>
<rect x="1456.23" y="569.6" width="5.8" height="21.1" fill="#f23645"/>
<rect x="1466.20" y="530.0" width="1.0" height="62.2" fill="#089981"/>
<rect x="1463.80" y="530.0" width="5.8" height="62.2" fill="#089981"/>
<rect x="1473.77" y="516.7" width="1.0" height="14.3" fill="#089981"/>
<rect x="1471.37" y="516.7" width="5.8" height="14.3" fill="#089981"/>
<rect x="1481.33" y="517.0" width="1.0" height="7.4" fill="#f23645"/>
<rect x="1478.93" y="517.0" width="5.8" height="7.4" fill="#f23645"/>
<rect x="1488.90" y="524.4" width="1.0" height="77.4" fill="#f23645"/>
<rect x="1486.50" y="524.4" width="5.8" height="54.5" fill="#f23645"/>
<rect x="1496.47" y="498.2" width="1.0" height="80.0" fill="#089981"/>
<rect x="1494.07" y="502.2" width="5.8" height="76.0" fill="#089981"/>
<rect x="1504.03" y="500.7" width="1.0" height="9.3" fill="#f23645"/>
<rect x="1501.63" y="500.7" width="5.8" height="5.3" fill="#f23645"/>
<rect x="1511.60" y="413.3" width="1.0" height="92.7" fill="#089981"/>
<rect x="1509.20" y="416.0" width="5.8" height="90.0" fill="#089981"/>
<rect x="1519.17" y="384.4" width="1.0" height="32.3" fill="#089981"/>
<rect x="1516.77" y="384.4" width="5.8" height="32.3" fill="#089981"/>
<rect x="1526.73" y="377.8" width="1.0" height="8.7" fill="#f23645"/>
<rect x="1524.33" y="385.0" width="5.8" height="1.5" fill="#f23645"/>
<rect x="1534.30" y="380.0" width="1.0" height="8.0" fill="#089981"/>
<rect x="1531.90" y="382.0" width="5.8" height="4.0" fill="#089981"/>
<rect x="1541.87" y="380.0" width="1.0" height="4.0" fill="#f23645"/>
<rect x="1539.47" y="382.0" width="5.8" height="1.8" fill="#f23645"/>
<rect x="1549.44" y="379.0" width="1.0" height="18.0" fill="#f23645"/>
<rect x="1547.04" y="383.0" width="5.8" height="14.0" fill="#f23645"/>
<rect x="1557.00" y="396.0" width="1.0" height="19.2" fill="#f23645"/>
<rect x="1554.60" y="396.0" width="5.8" height="19.2" fill="#f23645"/>
<rect x="1564.57" y="405.0" width="1.0" height="55.0" fill="#f23645"/>
<rect x="1562.17" y="415.2" width="5.8" height="44.8" fill="#f23645"/>
<rect x="1572.14" y="458.0" width="1.0" height="9.4" fill="#f23645"/>
<rect x="1569.74" y="458.0" width="5.8" height="9.4" fill="#f23645"/>
<rect x="1579.70" y="466.3" width="1.0" height="45.7" fill="#f23645"/>
<rect x="1577.30" y="466.3" width="5.8" height="43.3" fill="#f23645"/>
<rect x="1587.27" y="382.0" width="1.0" height="126.9" fill="#089981"/>
<rect x="1584.87" y="384.0" width="5.8" height="124.9" fill="#089981"/>
<rect x="1594.84" y="376.7" width="1.0" height="7.3" fill="#089981"/>
<rect x="1592.44" y="380.0" width="5.8" height="4.0" fill="#089981"/>
<rect x="1602.40" y="373.7" width="1.0" height="7.3" fill="#089981"/>
<rect x="1600.00" y="377.4" width="5.8" height="3.6" fill="#089981"/>
<rect x="1609.97" y="318.0" width="1.0" height="58.7" fill="#089981"/>
<rect x="1607.57" y="318.0" width="5.8" height="58.7" fill="#089981"/>
<rect x="1617.54" y="141.5" width="1.0" height="179.2" fill="#089981"/>
<rect x="1615.14" y="145.0" width="5.8" height="175.7" fill="#089981"/>
<rect x="1625.11" y="126.7" width="1.0" height="61.8" fill="#f23645"/>
<rect x="1622.70" y="145.0" width="5.8" height="43.5" fill="#f23645"/>
<rect x="1632.67" y="131.9" width="1.0" height="57.4" fill="#089981"/>
<rect x="1630.27" y="142.2" width="5.8" height="47.1" fill="#089981"/>
<rect x="1640.24" y="142.2" width="1.0" height="53.8" fill="#f23645"/>
<rect x="1637.84" y="142.2" width="5.8" height="53.8" fill="#f23645"/>
<rect x="1647.81" y="194.0" width="1.0" height="5.6" fill="#f23645"/>
<rect x="1645.41" y="195.5" width="5.8" height="1.5" fill="#f23645"/>
<rect x="1655.37" y="196.0" width="1.0" height="145.0" fill="#f23645"/>
<rect x="1652.97" y="196.0" width="5.8" height="145.0" fill="#f23645"/>
<rect x="1662.94" y="340.0" width="1.0" height="3.7" fill="#f23645"/>
<rect x="1660.54" y="340.0" width="5.8" height="1.5" fill="#f23645"/>
<rect x="1670.51" y="340.8" width="1.0" height="73.0" fill="#f23645"/>
<rect x="1668.11" y="340.8" width="5.8" height="73.0" fill="#f23645"/>
<rect x="1678.07" y="408.0" width="1.0" height="12.8" fill="#f23645"/>
<rect x="1675.67" y="412.8" width="5.8" height="8.0" fill="#f23645"/>
<rect x="1685.64" y="419.7" width="1.0" height="35.0" fill="#f23645"/>
<rect x="1683.24" y="419.7" width="5.8" height="6.6" fill="#f23645"/>
<rect x="1693.21" y="402.0" width="1.0" height="27.7" fill="#089981"/>
<rect x="1690.81" y="405.0" width="5.8" height="24.7" fill="#089981"/>
<rect x="1700.78" y="404.5" width="1.0" height="51.0" fill="#f23645"/>
<rect x="1698.38" y="404.5" width="5.8" height="51.0" fill="#f23645"/>
<rect x="1708.34" y="413.3" width="1.0" height="59.7" fill="#089981"/>
<rect x="1705.94" y="413.3" width="5.8" height="42.2" fill="#089981"/>
<rect x="1715.91" y="351.0" width="1.0" height="63.5" fill="#089981"/>
<rect x="1713.51" y="351.0" width="5.8" height="63.5" fill="#089981"/>
<rect x="1723.48" y="350.3" width="1.0" height="73.9" fill="#f23645"/>
<rect x="1721.08" y="350.3" width="5.8" height="73.9" fill="#f23645"/>
<rect x="1731.04" y="416.3" width="1.0" height="39.5" fill="#089981"/>
<rect x="1728.64" y="416.3" width="5.8" height="6.7" fill="#089981"/>
<rect x="1738.61" y="372.8" width="1.0" height="47.2" fill="#089981"/>
<rect x="1736.21" y="372.8" width="5.8" height="47.2" fill="#089981"/>
<rect x="1746.18" y="317.5" width="1.0" height="76.7" fill="#089981"/>
<rect x="1743.78" y="318.7" width="5.8" height="56.3" fill="#089981"/>
<rect x="1753.74" y="319.0" width="1.0" height="119.8" fill="#f23645"/>
<rect x="1751.34" y="319.0" width="5.8" height="119.8" fill="#f23645"/>
<rect x="1761.31" y="437.5" width="1.0" height="7.0" fill="#f23645"/>
<rect x="1758.91" y="438.3" width="5.8" height="4.7" fill="#f23645"/>
</g>
<line x1="0" y1="747.5" x2="1841" y2="747.5" stroke="#a4a3aa" stroke-width="1" stroke-dasharray="4.3 4.52"/>
<line x1="0" y1="861.5" x2="1841" y2="861.5" stroke="#77757f" stroke-width="1" stroke-dasharray="4.3 4.52"/>
<line x1="0" y1="974.5" x2="1841" y2="974.5" stroke="#a4a3aa" stroke-width="1" stroke-dasharray="4.3 4.52"/>
<line x1="21.5" y1="66" x2="21.5" y2="1009" stroke="#a8a8a8" stroke-width="1" stroke-dasharray="4.3 4.52"/>
<line x1="0" y1="940.5" x2="1814" y2="940.5" stroke="#a8a8a8" stroke-width="1" stroke-dasharray="4.3 4.52"/>
<g clip-path="url(#rsiclip)"><polyline points="-1.3,886.0 6.3,900.2 13.8,903.0 21.4,886.7 29.0,906.3 36.5,905.7 44.1,842.4 51.7,861.0 59.2,855.2 66.8,848.0 74.4,862.8 81.9,859.8 89.5,858.0 97.1,874.3 104.6,876.0 112.2,852.4 119.8,842.8 127.3,872.8 134.9,873.7 142.5,903.3 150.0,901.0 157.6,922.4 165.2,921.5 172.7,918.7 180.3,928.0 187.9,909.0 195.4,917.2 203.0,841.9 210.6,816.5 218.1,827.0 225.7,845.0 233.3,844.0 240.8,820.0 248.4,851.0 256.0,881.7 263.5,862.2 271.1,900.2 278.7,923.7 286.2,919.6 293.8,911.3 301.4,917.8 308.9,903.3 316.5,916.0 324.1,949.3 331.6,933.1 339.2,966.0 346.8,966.0 354.3,961.3 361.9,939.0 369.5,948.9 377.1,968.3 384.6,869.6 392.2,835.0 399.8,845.2 407.3,853.0 414.9,878.0 422.5,887.2 430.0,898.3 437.6,882.0 445.2,908.5 452.7,858.5 460.3,870.0 467.9,894.0 475.4,896.1 483.0,908.5 490.6,907.6 498.1,912.2 505.7,854.4 513.3,875.6 520.8,879.3 528.4,858.5 536.0,842.4 543.5,832.2 551.1,828.0 558.7,858.9 566.2,858.5 573.8,880.7 581.4,903.3 588.9,908.5 596.5,933.1 604.1,933.1 611.6,887.6 619.2,880.2 626.8,932.2 634.3,942.4 641.9,899.3 649.5,905.7 657.0,864.0 664.6,876.5 672.2,901.0 679.7,923.0 687.3,884.4 694.9,886.0 702.4,885.4 710.0,914.4 717.6,879.8 725.1,874.3 732.7,878.9 740.3,977.0 747.8,928.0 755.4,934.0 763.0,923.7 770.5,914.4 778.1,884.4 785.7,914.0 793.2,891.0 800.8,870.0 808.4,872.4 815.9,847.4 823.5,856.1 831.1,828.5 838.6,845.6 846.2,878.0 853.8,880.7 861.3,850.2 868.9,832.2 876.5,827.0 884.0,820.2 891.6,820.2 899.2,836.3 906.7,820.2 914.3,819.0 921.9,816.5 929.4,821.8 937.0,814.6 944.6,797.6 952.1,805.4 959.7,806.7 967.3,900.2 974.8,902.6 982.4,906.9 990.0,903.0 997.5,936.3 1005.1,866.9 1012.7,885.9 1020.2,887.8 1027.8,885.9 1035.4,880.4 1042.9,885.4 1050.5,913.7 1058.1,929.4 1065.6,943.3 1073.2,945.6 1080.8,915.6 1088.3,808.5 1095.9,832.2 1103.5,807.2 1111.0,795.7 1118.6,799.4 1126.2,801.7 1133.8,861.9 1141.3,848.5 1148.9,835.3 1156.5,837.8 1164.0,809.0 1171.6,783.1 1179.2,778.5 1186.7,781.3 1194.3,797.0 1201.9,793.0 1209.4,791.0 1217.0,769.3 1224.6,769.3 1232.1,771.5 1239.7,811.9 1247.3,844.3 1254.8,835.6 1262.4,896.5 1270.0,897.4 1277.5,845.2 1285.1,869.3 1292.7,855.9 1300.2,872.6 1307.8,879.4 1315.4,915.6 1322.9,882.2 1330.5,878.9 1338.1,898.0 1345.6,926.3 1353.2,917.8 1360.8,930.0 1368.3,899.4 1375.9,894.3 1383.5,896.0 1391.0,873.9 1398.6,876.3 1406.2,878.1 1413.7,875.4 1421.3,885.6 1428.9,906.9 1436.4,934.6 1444.0,970.4 1451.6,972.6 1459.1,980.0 1466.7,923.5 1474.3,911.9 1481.8,916.1 1489.4,946.7 1497.0,884.1 1504.5,886.1 1512.1,829.1 1519.7,812.4 1527.2,813.0 1534.8,810.6 1542.4,811.5 1549.9,825.4 1557.5,839.6 1565.1,874.8 1572.6,880.9 1580.2,909.6 1587.8,823.1 1595.3,821.1 1602.9,819.5 1610.5,787.2 1618.0,725.2 1625.6,754.8 1633.2,741.5 1640.7,776.7 1648.3,777.4 1655.9,857.2 1663.4,857.6 1671.0,889.0 1678.6,891.9 1686.1,895.0 1693.7,883.5 1701.3,906.3 1708.8,878.0 1716.4,849.6 1724.0,884.4 1731.5,880.4 1739.1,861.0 1746.7,831.7 1754.2,888.1 1761.8,890.0" fill="none" stroke="#7e57c2" stroke-width="1.3" stroke-linejoin="round"/>
<polyline points="0.0,951.0 14.8,938.0 29.6,921.5 44.4,905.7 51.9,891.9 59.3,885.4 68.5,880.7 75.9,879.8 83.3,875.6 90.7,874.3 97.1,875.0 104.6,874.2 112.2,870.8 119.8,866.5 127.3,865.5 134.9,863.2 142.5,863.0 150.0,867.2 157.6,871.6 165.2,876.3 172.7,881.4 180.3,886.1 187.9,889.6 195.4,893.8 203.0,891.5 210.6,887.2 218.1,885.4 225.7,885.6 233.3,883.5 240.8,879.7 248.4,875.9 256.0,874.6 263.5,870.3 271.1,868.7 278.7,869.1 286.2,868.5 293.8,868.7 301.4,868.7 308.9,873.1 316.5,880.2 324.1,888.9 331.6,895.2 339.2,903.9 346.8,914.4 354.3,922.2 361.9,926.3 369.5,932.5 377.1,937.4 384.6,933.5 392.2,927.5 399.8,922.8 407.3,918.1 414.9,916.3 422.5,914.3 430.0,910.6 437.6,907.0 445.2,902.9 452.7,895.2 460.3,888.7 467.9,885.5 475.4,881.7 483.0,877.4 490.6,880.1 498.1,885.6 505.7,886.3 513.3,887.9 520.8,888.0 528.4,886.0 536.0,882.0 543.5,878.4 551.1,872.7 558.7,872.7 566.2,871.9 573.8,870.9 581.4,871.4 588.9,871.4 596.5,873.3 604.1,874.8 611.6,877.1 619.2,877.4 626.8,881.2 634.3,887.2 641.9,891.3 649.5,896.5 657.0,899.1 664.6,900.4 672.2,903.4 679.7,906.4 687.3,905.1 694.9,903.5 702.4,900.1 710.0,898.7 717.6,898.2 725.1,897.7 732.7,893.9 740.3,896.4 747.8,898.5 755.4,900.5 763.0,904.7 770.5,907.5 778.1,906.3 785.7,905.6 793.2,906.1 800.8,904.9 808.4,904.0 815.9,899.2 823.5,897.5 831.1,894.3 838.6,891.9 846.2,884.8 853.8,881.4 861.3,875.5 868.9,868.9 876.5,862.7 884.0,858.1 891.6,851.4 899.2,847.5 906.7,843.9 914.3,840.1 921.9,837.9 929.4,835.5 937.0,834.5 944.6,831.0 952.1,825.9 959.7,820.6 967.3,824.1 974.8,829.2 982.4,834.9 990.0,840.8 997.5,849.1 1005.1,851.3 1012.7,856.0 1020.2,860.9 1027.8,865.8 1035.4,870.0 1042.9,875.1 1050.5,883.4 1058.1,892.2 1065.6,902.0 1073.2,905.2 1080.8,906.1 1088.3,899.1 1095.9,894.1 1103.5,884.8 1111.0,879.8 1118.6,873.6 1126.2,867.4 1133.8,865.7 1141.3,863.4 1148.9,859.9 1156.5,854.4 1164.0,845.8 1171.6,834.4 1179.2,822.5 1186.7,812.9 1194.3,812.0 1201.9,809.2 1209.4,808.1 1217.0,806.2 1224.6,804.1 1232.1,801.9 1239.7,798.3 1247.3,798.0 1254.8,798.0 1262.4,802.2 1270.0,808.6 1277.5,813.0 1285.1,819.5 1292.7,824.8 1300.2,830.2 1307.8,836.4 1315.4,845.3 1322.9,853.3 1330.5,861.2 1338.1,870.2 1345.6,878.4 1353.2,883.6 1360.8,890.4 1368.3,890.6 1375.9,890.4 1383.5,894.0 1391.0,894.3 1398.6,895.8 1406.2,896.2 1413.7,895.9 1421.3,893.7 1428.9,895.5 1436.4,899.5 1444.0,904.6 1451.6,907.9 1459.1,912.4 1466.7,911.9 1474.3,912.8 1481.8,914.4 1489.4,918.0 1497.0,918.7 1504.5,919.4 1512.1,915.9 1519.7,911.4 1527.2,906.2 1534.8,899.4 1542.4,890.6 1549.9,880.2 1557.5,870.7 1565.1,863.2 1572.6,860.2 1580.2,860.0 1587.8,853.4 1595.3,844.4 1602.9,839.8 1610.5,832.7 1618.0,825.3 1625.6,821.2 1633.2,816.1 1640.7,813.6 1648.3,811.2 1655.9,813.5 1663.4,814.8 1671.0,815.8 1678.6,816.6 1686.1,815.5 1693.7,819.8 1701.3,825.9 1708.8,830.1 1716.4,834.6 1724.0,845.9 1731.5,854.9 1739.1,863.4 1746.7,867.4 1754.2,875.3 1761.8,877.6" fill="none" stroke="#f5c63c" stroke-width="1.3" stroke-linejoin="round"/></g>
</svg><!-- legend -->
<div class="abs" style="left:0;top:69px;width:275px;height:29px;background:rgba(15,15,15,0.55)"></div>
<svg class="abs" style="left:0;top:70px" width="310" height="30" viewBox="0 70 310 30">
  <circle cx="12.5" cy="85" r="10.5" fill="#f7931a"/>
  <g transform="rotate(14 12.5 85)" fill="#fff">
    <text x="12.8" y="89.8" font-family="Liberation Sans" font-weight="bold" font-size="12.5" text-anchor="middle">B</text>
    <rect x="10.6" y="77.3" width="1.3" height="2.6"/><rect x="13.2" y="77.3" width="1.3" height="2.6"/>
    <rect x="10.6" y="90" width="1.3" height="2.6"/><rect x="13.2" y="90" width="1.3" height="2.6"/>
  </g>
  <circle cx="291.8" cy="84.3" r="10.6" fill="#0c2420"/>
  <circle cx="291.8" cy="84.3" r="5" fill="#22ab94"/>
</svg>
<div class="t" style="left:29px;top:75.5px;font-size:18px;color:#dcdcdc">비트코인</div>
<div class="t" style="left:108px;top:76px;font-size:17px;color:#dcdcdc">/</div>
<div class="t" style="left:121px;top:75.5px;font-size:18px;color:#dcdcdc">달러</div>
<div class="t" style="left:161px;top:76px;font-size:17px;color:#dcdcdc">·</div>
<div class="t" style="left:171.5px;top:76px;font-size:17px;color:#dcdcdc">1</div>
<div class="t" style="left:187px;top:76px;font-size:17px;color:#dcdcdc">·</div>
<div class="t" style="left:195px;top:76px;font-size:17px;color:#dcdcdc;letter-spacing:-0.3px">CRYPTO</div>
<div class="t" style="left:322px;top:77.5px;font-size:15px;color:#d6d6d6">시</div>
<div class="t" style="left:338px;top:77.5px;font-size:15px;color:#22ab94">95,625.96</div>
<div class="t" style="left:414px;top:77.5px;font-size:15px;color:#d6d6d6">고</div>
<div class="t" style="left:431px;top:77.5px;font-size:15px;color:#22ab94">95,652.07</div>
<div class="t" style="left:506px;top:77.5px;font-size:15px;color:#d6d6d6">저</div>
<div class="t" style="left:522px;top:77.5px;font-size:15px;color:#22ab94">95,599.44</div>
<div class="t" style="left:598px;top:77.5px;font-size:15px;color:#d6d6d6">종</div>
<div class="t" style="left:614px;top:77.5px;font-size:15px;color:#22ab94">95,649.98</div>
<div class="t" style="left:691px;top:77.5px;font-size:15px;color:#22ab94">+24.33 (+0.03%)</div>
<!-- sell / buy -->
<div class="abs" style="left:1px;top:104px;width:96px;height:41px;background:#0f0f0f;border:1.5px solid #b8303f;border-radius:6px"></div>
<div class="t" style="left:0;width:98px;text-align:center;top:110.5px;font-size:13.5px;letter-spacing:1.1px;-webkit-text-stroke:0.35px #e5414f;color:#e5414f">95,468.75</div>
<div class="t" style="left:0;width:98px;text-align:center;top:127px;font-size:12px;color:#e5414f">셀</div>
<div class="t" style="left:106px;top:117.5px;font-size:13px;font-family:'Liberation Serif',serif;color:#e8e8e8">0.00</div>
<div class="abs" style="left:139px;top:104px;width:97px;height:41px;background:#0f0f0f;border:1.5px solid #2f55c9;border-radius:6px"></div>
<div class="t" style="left:139px;width:97px;text-align:center;top:110.5px;font-size:13.5px;letter-spacing:1.1px;-webkit-text-stroke:0.35px #4a78ff;color:#4a78ff">95,468.75</div>
<div class="t" style="left:139px;width:97px;text-align:center;top:127px;font-size:12px;color:#4a78ff">바이</div>
<div class="abs" style="left:-4px;top:154px;width:36px;height:24px;background:#0f0f0f;border:1px solid #2e2e2e;border-radius:4px"></div>
<svg class="abs" style="left:0;top:150px" width="80" height="32" viewBox="0 150 80 32">
  <path d="M10.5 163.5 L15 167.5 L19.5 163.5" fill="none" stroke="#f0f0f0" stroke-width="1.8" stroke-linecap="round" stroke-linejoin="round"/>
  <circle cx="53.3" cy="166" r="10.5" fill="#3a1a1f"/>
  <rect x="52.2" y="160" width="2.3" height="8" rx="1" fill="#e5414f"/>
  <circle cx="53.3" cy="171" r="1.3" fill="#e5414f"/>
</svg>
<!-- right price axis -->
<div class="t m" style="left:1852px;top:77.5px;font-size:15px;color:#d1d4dc">95</div>
<div class="t m" style="left:1852px;top:124.8px;font-size:15px;color:#d1d4dc">95</div>
<div class="t m" style="left:1852px;top:172.1px;font-size:15px;color:#d1d4dc">95</div>
<div class="t m" style="left:1852px;top:219.4px;font-size:15px;color:#d1d4dc">95</div>
<div class="t m" style="left:1852px;top:266.7px;font-size:15px;color:#d1d4dc">95</div>
<div class="t m" style="left:1852px;top:314px;font-size:15px;color:#d1d4dc">95</div>
<div class="t m" style="left:1852px;top:361.3px;font-size:15px;color:#d1d4dc">95</div>
<div class="t m" style="left:1852px;top:408.6px;font-size:15px;color:#d1d4dc">95</div>
<div class="t m" style="left:1852px;top:502.2px;font-size:15px;color:#d1d4dc">95</div>
<div class="t m" style="left:1852px;top:549.5px;font-size:15px;color:#d1d4dc">95</div>
<div class="t m" style="left:1852px;top:596.8px;font-size:15px;color:#d1d4dc">95</div>
<div class="t m" style="left:1852px;top:644.1px;font-size:15px;color:#d1d4dc">95</div>
<!-- BTCUSD tag -->
<div class="abs" style="left:1781px;top:432px;width:60px;height:22px;background:#f23645;border-radius:3px 0 0 3px"></div>
<div class="t" style="left:1781px;width:60px;text-align:center;top:436px;font-size:13.5px;font-weight:bold;letter-spacing:-0.6px;color:#fff">BTCUSD</div>
<div class="abs" style="left:1842px;top:432px;width:24px;height:38.5px;background:#f23645"></div>
<div class="t" style="left:1852px;top:434.8px;font-size:15px;color:#fff">95</div>
<div class="t" style="left:1852px;top:451.5px;font-size:15px;color:#fff">00</div>
<!-- lightning -->
<svg class="abs" style="left:1746px;top:661px" width="32" height="32" viewBox="1746 661 32 32">
  <circle cx="1761.4" cy="676.4" r="11.8" fill="none" stroke="#b45fd6" stroke-width="2"/>
  <path d="M1765.9 670.2 L1757.1 677.3 H1761.7 L1757.7 683 L1766.7 675.5 H1762 Z" fill="#b45fd6" stroke="#b45fd6" stroke-width="0.6" stroke-linejoin="round"/>
</svg>
<!-- pane buttons -->
<div class="abs" style="left:1709px;top:699px;width:28px;height:28px;border:1px solid #2f2f2f;border-radius:6px"></div>
<div class="abs" style="left:1742px;top:699px;width:28px;height:28px;border:1px solid #2f2f2f;border-radius:6px"></div>
<div class="abs" style="left:1775px;top:699px;width:28px;height:28px;border:1px solid #2f2f2f;border-radius:6px"></div>
<div class="abs" style="left:1808px;top:699px;width:28px;height:28px;border:1px solid #2f2f2f;border-radius:6px"></div>
<svg class="abs" style="left:1700px;top:695px" width="140" height="36" viewBox="1700 695 140 36" fill="none" stroke="#e0e0e0" stroke-width="1.4" stroke-linecap="round" stroke-linejoin="round">
  <path d="M1722.3 707 V718 M1717.6 711.5 L1722.3 706.8 L1727 711.5"/>
  <path d="M1750.5 709 H1761.5 M1753.5 708.8 A2.2 2.2 0 0 1 1758.5 708.8 M1751.8 709.5 L1752.8 720 H1759.2 L1760.2 709.5"/>
  <path d="M1784.5 706.5 L1789 710 L1793.5 706.5 M1784.5 719.5 L1789 716 L1793.5 719.5"/>
  <path d="M1816.5 711.5 V709.5 A2 2 0 0 1 1818.5 707.5 H1825.5 A2 2 0 0 1 1827.5 709.5 V711.5 M1827.5 715 V717 A2 2 0 0 1 1825.5 719 H1818.5 A2 2 0 0 1 1816.5 717 V715"/>
</svg>
<!-- RSI axis -->
<div class="t m" style="left:1852px;top:739.5px;font-size:15px;color:#d1d4dc">70</div>
<div class="t m" style="left:1852px;top:797px;font-size:15px;color:#d1d4dc">60</div>
<div class="t m" style="left:1852px;top:853.5px;font-size:15px;color:#d1d4dc">50</div>
<div class="t m" style="left:1852px;top:910.5px;font-size:15px;color:#d1d4dc">40</div>
<div class="t m" style="left:1852px;top:967px;font-size:15px;color:#d1d4dc">30</div>
<div class="abs" style="left:1842px;top:859px;width:24px;height:22px;background:#f5c63c"></div>
<div class="t" style="left:1852px;top:862.5px;font-size:15px;color:#111">46</div>
<div class="abs" style="left:1842px;top:881px;width:24px;height:20px;background:#7e57c2"></div>
<div class="t" style="left:1852px;top:883.5px;font-size:15px;color:#fff">44</div>
<div class="abs" style="left:1814px;top:927px;width:27px;height:26px;background:#2c2c2c;border-radius:3px 0 0 3px"></div>
<div class="abs" style="left:1842px;top:927px;width:24px;height:26px;background:#363636"></div>
<div class="t" style="left:1852px;top:932.5px;font-size:15px;font-weight:bold;color:#f0f0f0">36</div>
<svg class="abs" style="left:1814px;top:927px" width="27" height="26" viewBox="1814 927 27 26" fill="none" stroke="#e8e8e8" stroke-width="1.3">
  <circle cx="1827.5" cy="940" r="8.5"/>
  <path d="M1827.5 935 V945 M1822.5 940 H1832.5"/>
</svg>
<!-- TradingView logo -->
<svg class="abs" style="left:0;top:966px" width="48" height="34" viewBox="0 966 48 34" fill="#e2e2e2" stroke="#0f0f0f" stroke-width="2.6" paint-order="stroke" stroke-linejoin="round">
  <path d="M6 973.1 H19.8 V990.9 H13 V980.6 H6 Z"/>
  <circle cx="26.4" cy="976.8" r="3.3"/>
  <path d="M33.4 973.1 H41.8 L35.2 990.9 H26.6 Z"/>
</svg>
<div class="t" style="left:50.5px;top:969.5px;font-size:25px;font-weight:bold;color:#e2e2e2;text-shadow:0 0 1.5px #0f0f0f,0 0 1.5px #0f0f0f,0 0 1.5px #0f0f0f">TradingView</div>
<!-- time axis -->
<div class="t m" style="left:142.5px;top:1017.6px;font-size:15px;letter-spacing:-0.35px;color:#c9cbd1;transform:translateX(-50%)">18:00</div>
<div class="t m" style="left:256px;top:1017.6px;font-size:15px;letter-spacing:-0.35px;color:#c9cbd1;transform:translateX(-50%)">18:15</div>
<div class="t m" style="left:369.5px;top:1017.6px;font-size:15px;letter-spacing:-0.35px;color:#c9cbd1;transform:translateX(-50%)">18:30</div>
<div class="t m" style="left:483px;top:1017.6px;font-size:15px;letter-spacing:-0.35px;color:#c9cbd1;transform:translateX(-50%)">18:45</div>
<div class="t m" style="left:596.5px;top:1017.6px;font-size:15px;letter-spacing:-0.35px;color:#c9cbd1;transform:translateX(-50%)">19:00</div>
<div class="t m" style="left:710px;top:1017.6px;font-size:15px;letter-spacing:-0.35px;color:#c9cbd1;transform:translateX(-50%)">19:15</div>
<div class="t m" style="left:823.5px;top:1017.6px;font-size:15px;letter-spacing:-0.35px;color:#c9cbd1;transform:translateX(-50%)">19:30</div>
<div class="t m" style="left:937px;top:1017.6px;font-size:15px;letter-spacing:-0.35px;color:#c9cbd1;transform:translateX(-50%)">19:45</div>
<div class="t m" style="left:1050.5px;top:1017.6px;font-size:15px;letter-spacing:-0.35px;color:#c9cbd1;transform:translateX(-50%)">20:00</div>
<div class="t m" style="left:1164px;top:1017.6px;font-size:15px;letter-spacing:-0.35px;color:#c9cbd1;transform:translateX(-50%)">20:15</div>
<div class="t m" style="left:1277.5px;top:1017.6px;font-size:15px;letter-spacing:-0.35px;color:#c9cbd1;transform:translateX(-50%)">20:30</div>
<div class="t m" style="left:1391px;top:1017.6px;font-size:15px;letter-spacing:-0.35px;color:#c9cbd1;transform:translateX(-50%)">20:45</div>
<div class="t m" style="left:1504.5px;top:1017.6px;font-size:15px;letter-spacing:-0.35px;color:#c9cbd1;transform:translateX(-50%)">21:00</div>
<div class="t m" style="left:1618px;top:1017.6px;font-size:15px;letter-spacing:-0.35px;color:#c9cbd1;transform:translateX(-50%)">21:15</div>
<div class="t m" style="left:1731.5px;top:1017.6px;font-size:15px;letter-spacing:-0.35px;color:#c9cbd1;transform:translateX(-50%)">21:30</div>
<div class="abs" style="left:0;top:1007.5px;width:151px;height:29.5px;background:#3a3a3a;border-radius:0 3px 3px 0"></div>
<div class="t" style="left:3px;top:1017px;font-size:14px;font-weight:bold;color:#f2f2f2">일</div>
<div class="t" style="left:20px;top:1017px;font-size:14px;font-weight:bold;color:#f2f2f2">2025-05-04</div>
<div class="t" style="left:105px;top:1017px;font-size:14px;font-weight:bold;color:#f2f2f2">17:44</div>
<!-- bottom bar -->
<div class="abs" style="left:0;top:1041px;width:1866px;height:1.5px;background:#2a2a2a"></div>
<div class="t m" style="left:8.5px;top:1057.5px;font-size:16px;color:#dbdbdb;letter-spacing:-0.4px">1D</div>
<div class="t m" style="left:41.5px;top:1057.5px;font-size:16px;color:#dbdbdb;letter-spacing:-0.4px">5D</div>
<div class="t m" style="left:76px;top:1057.5px;font-size:16px;color:#dbdbdb;letter-spacing:-0.4px">1M</div>
<div class="t m" style="left:110.5px;top:1057.5px;font-size:16px;color:#dbdbdb;letter-spacing:-0.4px">3M</div>
<div class="t m" style="left:145.5px;top:1057.5px;font-size:16px;color:#dbdbdb;letter-spacing:-0.4px">6M</div>
<div class="t m" style="left:181px;top:1057.5px;font-size:16px;color:#dbdbdb;letter-spacing:-0.4px">YTD</div>
<div class="t m" style="left:225.5px;top:1057.5px;font-size:16px;color:#dbdbdb;letter-spacing:-0.4px">1Y</div>
<div class="t m" style="left:258px;top:1057.5px;font-size:16px;color:#dbdbdb;letter-spacing:-0.4px">5Y</div>
<div class="t m" style="left:292px;top:1056.5px;font-size:16px;color:#dbdbdb">전체</div>
<div class="abs" style="left:335.3px;top:1052px;width:1px;height:26px;background:#3a3a3a"></div>
<svg class="abs" style="left:348px;top:1050px" width="32" height="30" viewBox="348 1050 32 30" fill="none" stroke="#e0e0e0" stroke-width="1.5" stroke-linecap="round" stroke-linejoin="round">
  <path d="M353 1067 V1061 A3 3 0 0 1 356 1058 H372 A3 3 0 0 1 375 1061 V1072 A3 3 0 0 1 372 1075 H366"/>
  <path d="M353 1063.5 H375 M359.5 1054.5 V1058.5 M368.5 1054.5 V1058.5"/>
  <path d="M353 1071 H362 M359 1068 L362 1071 L359 1074"/>
</svg>
<div class="t m" style="left:1796.5px;top:1057.5px;font-size:16px;color:#e0e0e0">21:34:42</div>

</body></html>
